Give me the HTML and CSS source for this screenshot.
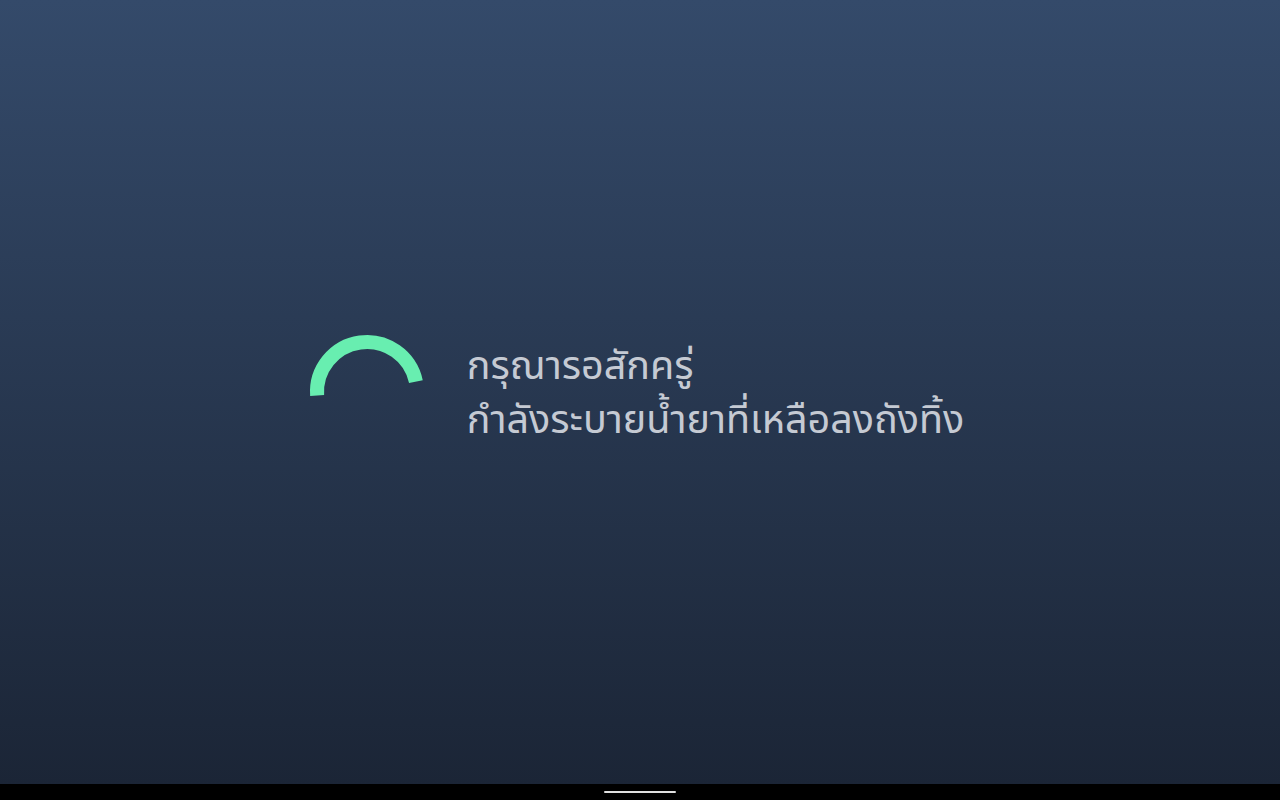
FILE: index.html
```html
<!DOCTYPE html>
<html lang="th">
<head>
<meta charset="utf-8">
<link rel="stylesheet" href="styles.css">
</head>
<body>
<div class="screen">
  <main class="content">
    <div class="status">
      <svg class="spinner" width="120" height="120" viewBox="0 0 120 120">
        <path d="M10.12 63.49 A50 50 0 0 1 108.91 49.6" fill="none" stroke="#68eeb0" stroke-width="14"/>
      </svg>
      <div class="message">
        <p class="line">กรุณารอสักครู่</p>
        <p class="line">กำลังระบายน้ำยาที่เหลือลงถังทิ้ง</p>
      </div>
    </div>
  </main>
  <footer class="navbar"><span class="handle"></span></footer>
</div>
</body>
</html>
```
FILE: styles.css
```css
html, body {
  margin: 0;
  padding: 0;
  height: 100%;
}
body {
  font-family: "Noto Sans Thai", "Noto Sans", sans-serif;
}
.screen {
  display: flex;
  flex-direction: column;
  height: 800px;
  width: 1280px;
}
.content {
  flex: 1;
  background: linear-gradient(to bottom, #344a6a 0%, #1b2536 100%);
  display: flex;
  align-items: center;
  justify-content: center;
}
.status {
  display: flex;
  align-items: center;
  gap: 40px;
}
.spinner {
  display: block;
}
.message {
  color: #c5cad3;
  font-size: 39.5px;
  line-height: 54px;
  padding: 4px 9px 0 0;
}
.line {
  margin: 0;
}
.navbar {
  height: 16px;
  background: #000;
  display: flex;
  justify-content: center;
  align-items: center;
}
.handle {
  width: 72px;
  height: 2px;
  background: #e0e0e0;
  border-radius: 1px;
}
```
